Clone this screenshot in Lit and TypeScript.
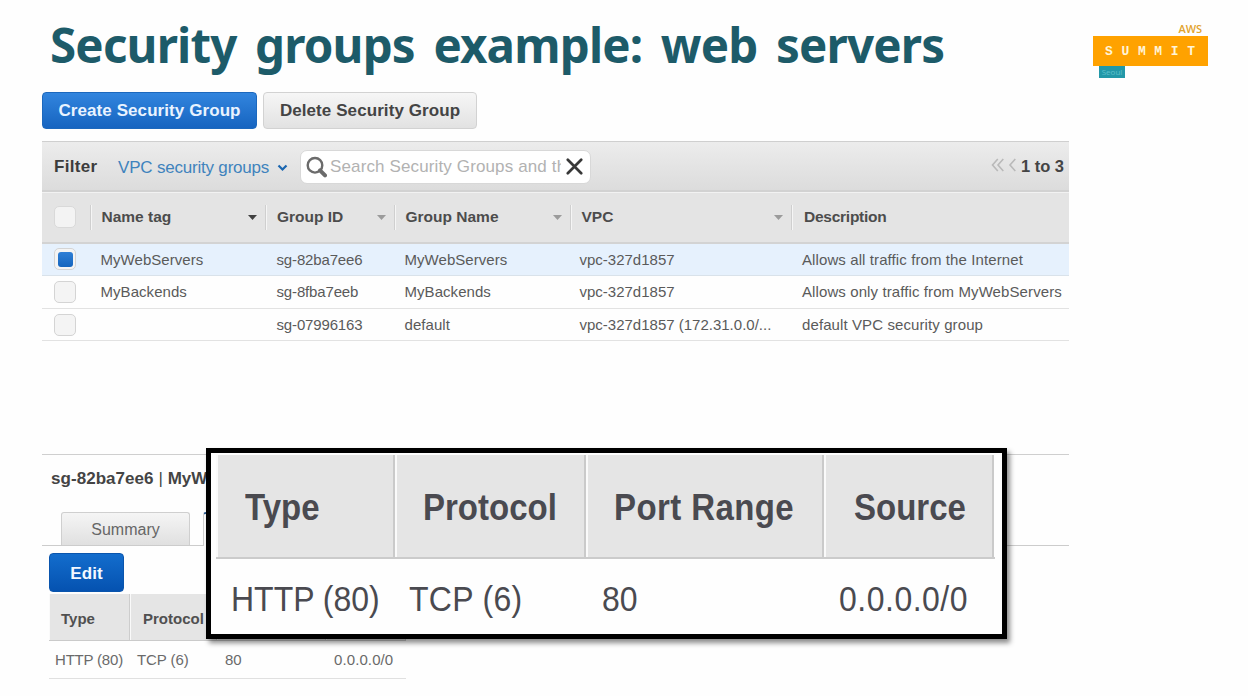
import { LitElement, html, css, svg } from "lit";
import { customElement } from "lit/decorators.js";
import { classMap } from "lit/directives/class-map.js";

interface Group {
  name: string;
  id: string;
  group: string;
  vpc: string;
  description: string;
  selected?: boolean;
}

const GROUPS: Group[] = [
  { name: "MyWebServers", id: "sg-82ba7ee6", group: "MyWebServers", vpc: "vpc-327d1857", description: "Allows all traffic from the Internet", selected: true },
  { name: "MyBackends", id: "sg-8fba7eeb", group: "MyBackends", vpc: "vpc-327d1857", description: "Allows only traffic from MyWebServers" },
  { name: "", id: "sg-07996163", group: "default", vpc: "vpc-327d1857 (172.31.0.0/...", description: "default VPC security group" },
];

const COLUMNS = ["Name tag", "Group ID", "Group Name", "VPC", "Description"];
const RULE_HEAD = ["Type", "Protocol", "Port Range", "Source"];
const RULE = ["HTTP (80)", "TCP (6)", "80", "0.0.0.0/0"];

@customElement("summit-logo")
export class SummitLogo extends LitElement {
  static styles = css`
    :host { display: flex; flex-direction: column; width: 115px; font-family: "Open Sans", sans-serif; }
    .aws { height: 14px; line-height: 13px; text-align: right; padding-right: 6px; font-size: 11px; font-weight: 600; color: #e2a32c; letter-spacing: -0.1px; }
    .bar { height: 30px; background: #ffa200; display: flex; align-items: center; justify-content: space-between; padding: 1px 13px 0 12px; box-sizing: border-box; font: 700 13px/29px "Liberation Mono", monospace; color: #fff4d8; }
    .city { width: 26px; height: 12px; margin-left: 6px; background: #2398a8; color: #5fc0cc; font-size: 8px; line-height: 12px; text-align: center; }
  `;
  render() {
    return html`<div class="aws">AWS</div>
      <div class="bar">${[..."SUMMIT"].map((c) => html`<span>${c}</span>`)}</div>
      <div class="city">Seoul</div>`;
  }
}

@customElement("rule-zoom")
export class RuleZoom extends LitElement {
  static styles = css`
    :host { display: block; box-sizing: border-box; width: 801px; height: 191px; border: 5px solid #000; background: #fefefe; box-shadow: 3px 4px 5px rgba(0, 0, 0, 0.45); padding: 2px 7px 0 5px; font-family: "Liberation Sans", Arial, sans-serif; color: #4a4a50; overflow: hidden; }
    .row { display: grid; grid-template-columns: 179px 191px 238px 170px; }
    .head { height: 104px; box-sizing: border-box; border-bottom: 2px solid #cbcbcb; }
    .th { background: #e5e5e5; border-right: 2px solid #cacaca; border-left: 2px solid #fafafa; display: flex; align-items: center; font-weight: 700; font-size: 33px; }
    .td { display: flex; align-items: center; font-size: 32px; height: 78px; }
    .t { display: block; transform: scaleY(1.1); white-space: nowrap; line-height: 40px; margin-top: 1px; }
    .th .t { margin-top: 3px; }
    .th0 { padding-left: 27px; }
    .th1 { padding-left: 26px; }
    .th2 { padding-left: 26px; letter-spacing: 0.4px; }
    .th3 { padding-left: 28px; letter-spacing: 0; }
    .td0 { padding-left: 15px; }
    .td1 { padding-left: 14px; letter-spacing: 0.3px; }
    .td2 { padding-left: 16px; }
    .td3 { padding-left: 15px; letter-spacing: 0.5px; }
  `;
  render() {
    return html`
      <div class="row head">${RULE_HEAD.map((t, i) => html`<div class="th th${i}"><span class="t">${t}</span></div>`)}</div>
      <div class="row">${RULE.map((t, i) => html`<div class="td td${i}"><span class="t">${t}</span></div>`)}</div>`;
  }
}

@customElement("app-root")
export class AppRoot extends LitElement {
  static styles = css`
    :host { display: block; position: relative; width: 1248px; height: 696px; overflow: hidden; background: #fefefe; font-family: "Liberation Sans", Arial, sans-serif; color: #555; }
    * { box-sizing: border-box; }
    .top { display: flex; justify-content: space-between; height: 92px; padding: 0 40px 0 50px; }
    .title { margin: 11px 0 0; font: 700 47.5px/68px "Noto Sans", "Open Sans", sans-serif; letter-spacing: -0.82px; word-spacing: 7px; color: #1d5b69; white-space: nowrap; }
    summit-logo { margin-top: 22px; }
    .main { width: 1027px; margin-left: 42px; }
    .buttons { display: flex; gap: 6px; height: 49px; }
    .btn { height: 37px; border-radius: 4px; font-weight: 700; font-size: 17px; line-height: 35px; letter-spacing: 0.08px; text-align: center; white-space: nowrap; }
    .create { width: 215px; border: 1px solid #1c68bd; background: linear-gradient(#3285de, #1664c0); color: #e9f3ff; }
    .delete { width: 214px; border: 1px solid #d2d2d2; background: linear-gradient(#f6f6f6, #e2e2e2); color: #444; }
    .toolbar { height: 51px; display: flex; align-items: center; border-top: 1px solid #cfcfcf; border-bottom: 2px solid #d2d2d2; background: linear-gradient(#ececec, #dcdcdc); padding: 1px 5px 0 12px; }
    .label { width: 64px; font-weight: 700; font-size: 17px; letter-spacing: 0.3px; color: #3c3c3c; }
    .link { display: flex; align-items: center; width: 182px; gap: 8px; font-size: 17px; letter-spacing: -0.2px; color: #3f83bd; white-space: nowrap; padding-top: 2px; }
    .search { display: flex; align-items: center; width: 291px; height: 34px; border: 1px solid #d8d8d8; border-radius: 7px; background: #fff; padding: 0 7px 0 5px; }
    .hint { width: 231px; margin-left: 3px; margin-right: 5px; overflow: hidden; white-space: nowrap; font-size: 17px; letter-spacing: 0.13px; color: #b2b2b2; }
    .pager { margin-left: auto; display: flex; align-items: center; font-weight: 700; font-size: 16.5px; color: #444; }
    .pager svg { margin: -4px 4px 0 0; }
    .grid { display: grid; grid-template-columns: 47.5px 175.5px 128.5px 176px 221.5px 1fr; align-items: center; }
    .thead { height: 51.5px; background: #e4e4e4; border-top: 1px solid #f2f2f2; border-bottom: 2px solid #d3d3d3; font-weight: 700; font-size: 15.5px; color: #4c4c4c; }
    .th { display: flex; align-items: center; height: 25px; border-left: 1px solid #cfcfcf; box-shadow: inset 1px 0 #f5f5f5; padding: 0 8px 0 11px; }
    .th svg { margin-left: auto; }
    .th:nth-child(6) { letter-spacing: -0.25px; padding-left: 12px; }
    .tr { height: 32.67px; border-bottom: 1.5px solid #e2e2e2; font-size: 15px; letter-spacing: 0.05px; color: #5a5a5a; background: #fefefe; }
    .tr.on { background: #e6f1fd; border-bottom-color: #d9e2ea; }
    .td { white-space: nowrap; padding-left: 11px; }
    .td:last-child { letter-spacing: 0.1px; }
    .id { letter-spacing: -0.15px; padding-left: 11.5px; }
    .vpc { letter-spacing: 0; padding-left: 10px; }
    .box { width: 22px; height: 22px; margin-left: 12px; border: 1px solid #d4d4d4; border-radius: 5px; background: #f4f4f4; display: flex; align-items: center; justify-content: center; }
    .box.hd { background: #f3f3f3; border-color: #d9d9d9; }
    .box i { width: 15px; height: 15px; border-radius: 3px; background: linear-gradient(#2f7fd6, #1565be); }
    .details { margin-top: 113px; border-top: 1px solid #cfcfcf; }
    .subject { height: 57px; padding: 1px 0 0 9px; font-size: 17px; line-height: 46px; color: #444; white-space: nowrap; font-weight: 700; letter-spacing: 0.05px; }
    .bar { font-weight: 400; }
    .tabs { display: flex; gap: 13px; height: 34px; padding-left: 19px; border-bottom: 1px solid #cccccc; }
    .tab { width: 129px; height: 33px; border: 1px solid #cfcfcf; border-bottom: 0; border-radius: 3px 3px 0 0; background: linear-gradient(#f5f5f5, #e0e0e0); text-align: center; font-size: 16px; line-height: 33px; color: #666; }
    .tab.active { height: 34px; background: #fefefe; border-top: 2px solid #2b5c92; }
    .edit { width: 75px; height: 39px; margin: 7px 0 2px 7px; border: 1px solid #0a55ad; background: linear-gradient(#136dcd, #0552b0); color: #f3f8ff; line-height: 39px; }
    .rules { width: 357px; margin-left: 7px; }
    .rrow { display: grid; grid-template-columns: 81px 87px 109px 80px; align-items: center; font-size: 15px; }
    .rhead { height: 47px; background: #e5e5e5; border-bottom: 1px solid #cacaca; font-weight: 700; color: #505050; }
    .rh { height: 100%; display: flex; align-items: center; padding-left: 12px; border-right: 1px solid #cdcdcd; box-shadow: inset 1px 0 #fafafa; }
    .rh + .rh { padding-left: 13px; }
    .rh span { padding-top: 2px; }
    .rbody { height: 38px; border-bottom: 1px solid #e0e0e0; color: #6a6a6a; }
    .rd { white-space: nowrap; padding-left: 6px; }
    .rd0 { letter-spacing: -0.2px; }
    .rd1 { padding-left: 7px; letter-spacing: -0.1px; }
    .rd2 { padding-left: 8px; }
    .rd3 { padding-left: 8px; letter-spacing: 0.1px; }
    .zoom { position: absolute; left: 206px; top: 448px; }
  `;

  private arrow(dark: boolean) {
    return html`<svg width="9" height="5" viewBox="0 0 9 5"><path d="M0 0h9L4.5 5z" fill=${dark ? "#404040" : "#9b9b9b"} /></svg>`;
  }

  render() {
    const chevron = svg`<path d="M1.5 1.5 5.5 5.5 9.5 1.5" fill="none" stroke="#1a66b0" stroke-width="2.2"/>`;
    return html`
      <div class="top"><h1 class="title">Security groups example: web servers</h1><summit-logo></summit-logo></div>
      <div class="main">
        <div class="buttons">
          <div class="btn create">Create Security Group</div>
          <div class="btn delete">Delete Security Group</div>
        </div>
        <div class="toolbar">
          <div class="label">Filter</div>
          <div class="link">VPC security groups<svg width="11" height="8" viewBox="0 0 11 8">${chevron}</svg></div>
          <div class="search">
            <svg width="21" height="22" viewBox="0 0 21 22"><circle cx="9" cy="9.3" r="7.3" fill="none" stroke="#6b6b6b" stroke-width="2.4" /><path d="M14 14.4 19 19.4" stroke="#6b6b6b" stroke-width="4" stroke-linecap="round" /></svg>
            <div class="hint">Search Security Groups and their</div>
            <svg width="17" height="17" viewBox="0 0 17 17"><path d="M1.8 1.8 15.2 15.2M15.2 1.8 1.8 15.2" stroke="#383838" stroke-width="2.7" stroke-linecap="round" /></svg>
          </div>
          <div class="pager">
            <svg width="26" height="14" viewBox="0 0 26 14"><path d="M6.8 1 1.5 7l5.3 6M12.3 1 7 7l5.3 6M24.3 1 19 7l5.3 6" fill="none" stroke="#b9b9b9" stroke-width="1.6" /></svg>
            <span>1 to 3</span>
          </div>
        </div>
        <div class="grid thead">
          <div class="box hd"></div>
          ${COLUMNS.map((c, i) => html`<div class="th">${c}${i < 4 ? this.arrow(i === 0) : ""}</div>`)}
        </div>
        ${GROUPS.map((g) => html`
          <div class=${classMap({ grid: true, tr: true, on: !!g.selected })}>
            <div class="box">${g.selected ? html`<i></i>` : ""}</div>
            <div class="td">${g.name}</div>
            <div class="td id">${g.id}</div>
            <div class="td">${g.group}</div>
            <div class="td vpc">${g.vpc}</div>
            <div class="td">${g.description}</div>
          </div>`)}
        <div class="details">
          <div class="subject">sg-82ba7ee6<span class="bar"> | </span>MyW</div>
          <div class="tabs"><div class="tab">Summary</div><div class="tab active"></div></div>
          <div class="btn edit">Edit</div>
          <div class="rules">
            <div class="rrow rhead">${RULE_HEAD.map((t, i) => html`<div class="rh"><span>${i < 2 ? t : ""}</span></div>`)}</div>
            <div class="rrow rbody">${RULE.map((t, i) => html`<div class="rd rd${i}">${t}</div>`)}</div>
          </div>
        </div>
      </div>
      <rule-zoom class="zoom"></rule-zoom>
    `;
  }
}
